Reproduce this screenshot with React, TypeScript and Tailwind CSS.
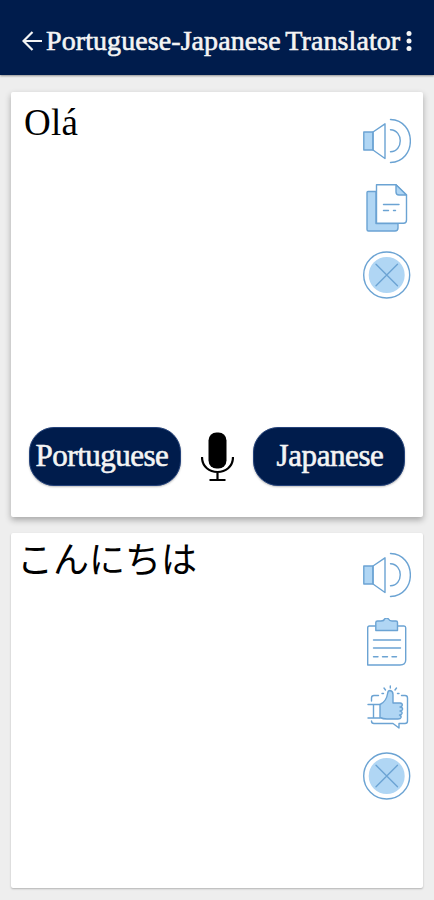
import React from "react";

const line = "#6ba3d3";
const fill = "#b0d6f4";

function Icon({ children }: { children: React.ReactNode }) {
  return (
    <svg className="block h-12 w-12 shrink-0" viewBox="0 0 48 48" fill="none" stroke={line} strokeWidth="1.4" strokeLinecap="round" strokeLinejoin="round">
      {children}
    </svg>
  );
}

function Speaker() {
  return (
    <Icon>
      <path d="M0.8 15H10V33H0.8Z" fill={fill} />
      <path d="M10 15L22 6.8V41.5L10 33Z" />
      <path d="M27.5 12.8C40.5 13.3 40.5 34.3 27.5 34.8M27.5 2.5C54 3.5 54 44.5 27.5 45.5" />
    </Icon>
  );
}

function Copy() {
  return (
    <Icon>
      <path d="M4 8.5Q4 7.5 5 7.5H13V39.5H35V44Q35 47 32 47H5.5Q4 47 4 45.5Z" fill={fill} />
      <path d="M13.5 0.8H33L43.5 11V36Q43.5 39.2 40.5 39.2H13.5Z" fill="white" />
      <path d="M33 0.8V8Q33 11 36 11H43.5Z" fill={fill} />
      <path d="M20.5 20.5H36M20.5 26.5H25.5M30.5 26.5H32.5" />
    </Icon>
  );
}

function Clear() {
  return (
    <Icon>
      <circle cx="23.7" cy="24" r="23" />
      <circle cx="23.7" cy="24" r="18" fill={fill} stroke="none" />
      <path d="M13 13.2L34.5 34.7M34.5 13.2L13 34.7" />
    </Icon>
  );
}

function Clipboard() {
  return (
    <Icon>
      <path d="M12.5 8H6.5Q4.7 8 4.7 9.8V47H37Q42.7 47 42.7 42V9.8Q42.7 8 41 8H35" />
      <path d="M12.8 4.5Q12.8 3 14.5 3H18Q21 3 21.5 1Q23.7 -0.8 25.5 1Q26.5 3 29 3H33Q34.5 3 34.5 4.5V12.5H12.8Z" fill={fill} />
      <path d="M10.5 22H37.5M10.5 30H37.5M10.5 38.8H15M19.5 38.8H24.5M29 38.8H33.5" />
    </Icon>
  );
}

function ThumbsUp() {
  return (
    <Icon>
      <path d="M8.500 16V13Q8.500 10.500 11 10.500H15.500M38.500 10.500H42Q44.500 10.500 44.500 13V36Q44.500 38.500 42 38.500H36V43L30 38.500H11Q8.500 38.500 8.500 36" />
      <path d="M5 19.500H17M5 33H17M10.500 19.500V33" />
      <path d="M17 19.500Q23.500 16.500 24.700 8Q25 5.500 27 5.500Q30 6 30 9.500V18H37Q39.800 18.300 39.200 20.500Q38.800 22 37 22Q40 22.300 39.500 24.500Q39 26 37 26Q39.500 26.500 39 28.500Q38.500 30 36.500 30Q38.500 30.700 38 32.500Q37.500 34 35 34H24Q20 34 17 32.500Z" fill={fill} />
      <path d="M27.300 3V1M22.500 5L21 3M32 5L33.500 3M20.500 8.500H19M34.500 8.500H36" />
    </Icon>
  );
}

function LanguageButton({ label, spacing }: { label: string; spacing: string }) {
  return (
    <button className={`h-[59px] w-[152px] rounded-[25px] border border-[#24427a] bg-[#001c4c] pr-1.5 pb-0.5 text-center text-[31px] leading-none whitespace-nowrap text-[#f4f4f4] shadow-[0_1px_2px_rgba(0,0,0,0.25)] [-webkit-text-stroke:0.6px_#f4f4f4] ${spacing}`}>
      {label}
    </button>
  );
}

export default function App() {
  return (
    <main className="flex h-[900px] w-[434px] flex-col overflow-hidden bg-[#eeeeee] font-['Liberation_Serif','Noto_Sans_CJK_JP',serif]">
      <header className="flex h-[75px] shrink-0 items-center bg-[#001c4c] pt-[7px] pl-[22px] text-[#f4f4f4] shadow-[0_1px_2px_rgba(0,0,0,0.4)]">
        <svg className="mr-[4px] block h-5 w-5 shrink-0" viewBox="0 0 20 20" fill="none" stroke="currentColor" strokeWidth="2.2">
          <path d="M20 10H1.8M10.5 1L1.5 10L10.5 19" />
        </svg>
        <h1 className="w-[355px] shrink-0 text-[28px] leading-[34px] tracking-[0.08px] [word-spacing:-2px] whitespace-nowrap [-webkit-text-stroke:0.6px_#f4f4f4]">Portuguese-Japanese Translator</h1>
        <svg className="ml-[5px] block h-5 w-[6px] shrink-0" viewBox="0 0 6 20" fill="currentColor">
          <circle cx="3" cy="2.5" r="2.5" />
          <circle cx="3" cy="10" r="2.5" />
          <circle cx="3" cy="17.5" r="2.5" />
        </svg>
      </header>

      <section className="mt-[17px] ml-[11px] flex h-[425px] w-[412px] shrink-0 flex-col rounded-[2px] bg-white shadow-[0_3px_6px_rgba(0,0,0,0.3)]">
        <div className="flex h-[335px] justify-between pr-3 pl-[13px]">
          <p className="pt-[10px] text-[37px] leading-[42px] tracking-[0.3px] text-black">Olá</p>
          <div className="flex flex-col gap-[19px] pt-[25px]">
            <Speaker />
            <Copy />
            <Clear />
          </div>
        </div>
        <div className="flex items-start pl-[18px]">
          <LanguageButton label="Portuguese" spacing="tracking-[-0.5px]" />
          <svg className="mr-[19px] ml-5 mt-[5px] block h-[50px] w-[33px] shrink-0" viewBox="0 0 33 50" fill="none" stroke="black" strokeWidth="2.2">
            <rect x="7.5" y="0.5" width="18" height="36" rx="8" fill="black" stroke="none" />
            <path d="M1 25C1 45 32 45 32 25M16.5 40V48M8.5 48H24.5" />
          </svg>
          <LanguageButton label="Japanese" spacing="tracking-[-0.4px] pl-2" />
        </div>
      </section>

      <section className="mt-4 ml-[11px] flex h-[355px] w-[412px] shrink-0 justify-between rounded-[2px] bg-white pr-3 pl-[6px] shadow-[0_1px_2px_rgba(0,0,0,0.25)]">
        <p className="pt-0.5 font-['Noto_Sans_CJK_JP',sans-serif] text-[36px] leading-[45px] font-normal text-black">こんにちは</p>
        <div className="flex flex-col gap-[19px] pt-[18px]">
          <Speaker />
          <Clipboard />
          <ThumbsUp />
          <Clear />
        </div>
      </section>
    </main>
  );
}
